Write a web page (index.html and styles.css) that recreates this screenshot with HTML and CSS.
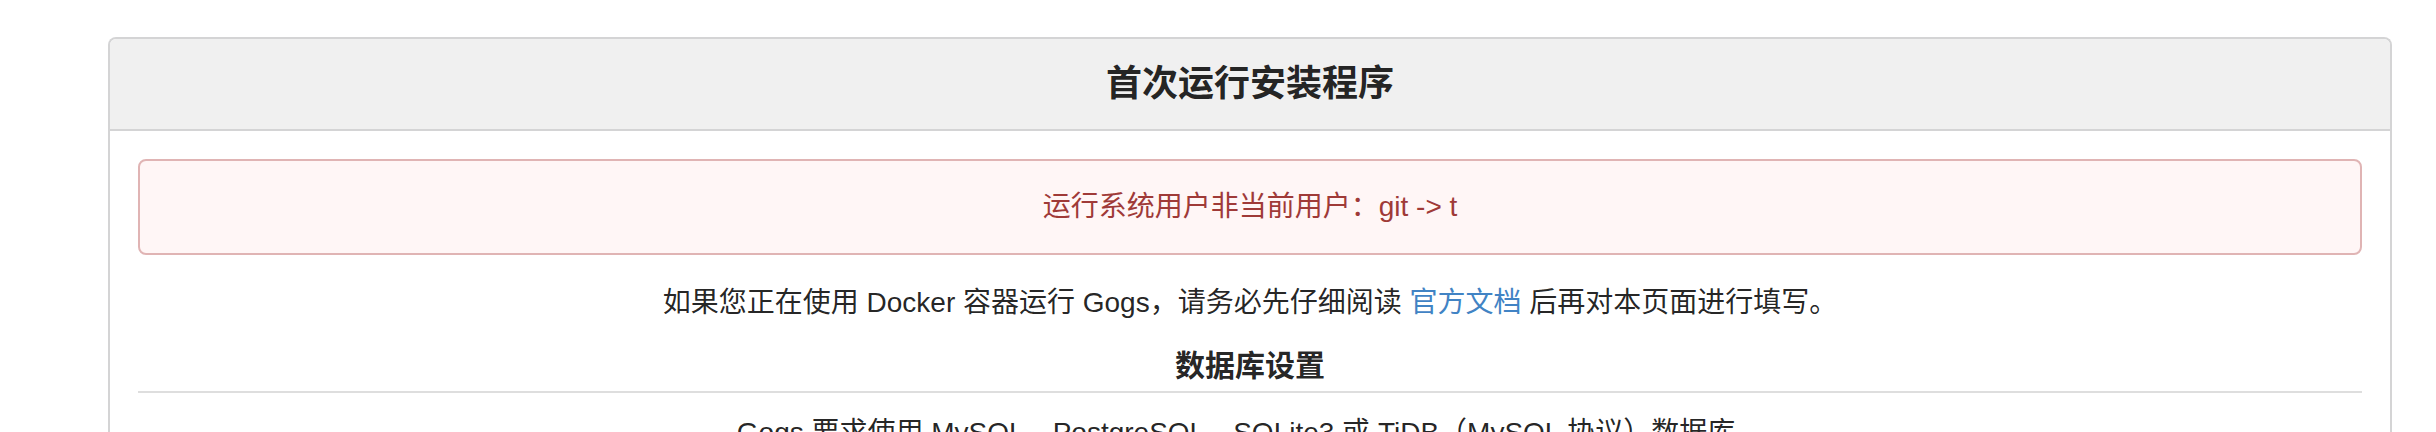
FILE: index.html
```html
<!DOCTYPE html>
<html lang="zh-CN">
<head>
<meta charset="utf-8">
<title>首次运行安装程序</title>
<link rel="stylesheet" href="styles.css">
</head>
<body>
<div class="page">
  <div class="panel">
    <h3 class="panel-header">首次运行安装程序</h3>
    <div class="panel-body">
      <div class="alert">运行系统用户非当前用户：git -&gt; t</div>
      <p class="notice">如果您正在使用 Docker 容器运行 Gogs，请务必先仔细阅读 <a class="link" href="#">官方文档</a> 后再对本页面进行填写。</p>
      <h4 class="section-title">数据库设置</h4>
      <p class="hint">Gogs 要求使用 MySQL、PostgreSQL、SQLite3 或 TiDB（MySQL 协议）数据库。</p>
    </div>
  </div>
</div>
</body>
</html>
```
FILE: styles.css
```css
html, body {
  margin: 0;
  padding: 0;
  background: #ffffff;
}
body {
  font-family: "Liberation Sans", "Noto Sans CJK SC", sans-serif;
  color: rgba(0, 0, 0, 0.87);
  font-size: 28px;
  line-height: 40px;
}
.page {
  padding: 37px 0 0 108px;
}
.panel {
  width: 2284px;
  box-sizing: border-box;
  border: 2px solid #d4d4d5;
  border-bottom: none;
  border-radius: 8px 8px 0 0;
  height: 420px;
}
.panel-header {
  margin: 0;
  background: #f0f0f0;
  border-bottom: 2px solid #d4d4d5;
  border-radius: 6px 6px 0 0;
  height: 90px;
  box-sizing: content-box;
  display: flex;
  align-items: center;
  justify-content: center;
  font-size: 36px;
  font-weight: 700;
  line-height: 46px;
  color: rgba(0, 0, 0, 0.87);
}
.panel-body {
  padding: 28px 28px 0 28px;
}
.alert {
  border: 2px solid #e0b4b4;
  background: #fff6f6;
  border-radius: 8px;
  padding: 26px 42px;
  color: #9f3a38;
  text-align: center;
  line-height: 40px;
}
.notice {
  margin: 28px 0 0 0;
  text-align: center;
  line-height: 40px;
}
.link {
  color: #4183c4;
  text-decoration: none;
}
.section-title {
  margin: 23px 0 0 0;
  font-size: 30px;
  font-weight: 700;
  line-height: 39px;
  text-align: center;
  padding-bottom: 6px;
  border-bottom: 2px solid #dedede;
}
.hint {
  margin: 20px 0 0 0;
  text-align: center;
}
```
